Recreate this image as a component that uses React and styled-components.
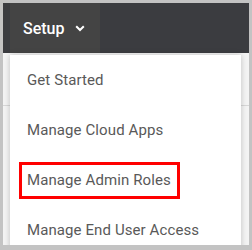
import React from 'react'
import styled, { createGlobalStyle } from 'styled-components'

const Global = createGlobalStyle`
    html, body {
        margin: 0;
        padding: 0;
        background: #c3c3c3;
    }
    body {
        font-family: Roboto, "Liberation Sans", sans-serif;
    }
`

const Frame = styled.div`
    width: 246px;
    height: 242px;
    margin: 3px 0 0 3px;
    display: flex;
    flex-direction: column;
    overflow: hidden;
    background: #f4f4f4;
`

const TopBar = styled.div`
    height: 50px;
    flex: none;
    display: flex;
    background: #3b3c40;
    padding-left: 7px;
`

const Tab = styled.div`
    width: 90px;
    display: flex;
    align-items: center;
    gap: 11px;
    padding-left: 13px;
    box-sizing: border-box;
    background: #444444;
    color: #ffffff;
    font-size: 16px;
    font-weight: 500;
`

const Page = styled.div`
    flex: 1;
    position: relative;
    padding: 2px 8px 0 7px;
    background: linear-gradient(#f4f4f4 52px, #d8d8d8 52px, #d8d8d8 53px, #f4f4f4 53px);
`

const Menu = styled.div`
    background: #ffffff;
    box-shadow: 0 0 6px rgba(0, 0, 0, 0.22);
    display: flex;
    flex-direction: column;
    padding-left: 9px;
`

const Item = styled.div`
    height: 50px;
    display: flex;
    align-items: center;
`

const Label = styled.span`
    height: 37px;
    display: inline-flex;
    align-items: center;
    box-sizing: border-box;
    padding: 0 6px 0 5px;
    border: 3px solid ${p => (p.$marked ? '#ff0000' : 'transparent')};
    color: #595959;
    font-size: 15px;
    letter-spacing: 0.1px;
`

const items = ['Get Started', 'Manage Cloud Apps', 'Manage Admin Roles', 'Manage End User Access']

const Chevron = () => (
    <svg width="10" height="7" viewBox="0 0 10 7">
        <path d="M1.2 1.2 L5 5 L8.8 1.2" fill="none" stroke="#ffffff" strokeWidth="2" />
    </svg>
)

export default function App() {
    return (
        <>
            <Global />
            <Frame>
                <TopBar>
                    <Tab>
                        Setup
                        <Chevron />
                    </Tab>
                </TopBar>
                <Page>
                    <Menu>
                        {items.map(name => (
                            <Item key={name}>
                                <Label $marked={name === 'Manage Admin Roles'}>{name}</Label>
                            </Item>
                        ))}
                    </Menu>
                </Page>
            </Frame>
        </>
    )
}
